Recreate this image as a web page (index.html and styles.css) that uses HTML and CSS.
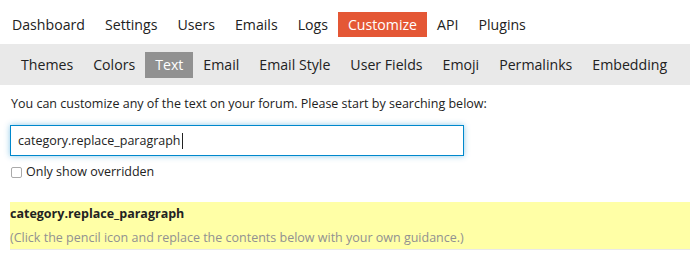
FILE: index.html
```html
<!DOCTYPE html>
<html lang="en">

<head>
    <link rel="stylesheet" href="styles.css">
    <meta charset="UTF-8">
    <meta name="viewport" content="width=device-width, initial-scale=1.0">
</head>

<body>
    <!-- admin top nav -->
    <ul class="nav-pills main-nav">
        <li><a href="#">Dashboard</a></li>
        <li><a href="#">Settings</a></li>
        <li><a href="#">Users</a></li>
        <li><a href="#">Emails</a></li>
        <li><a href="#">Logs</a></li>
        <li><a href="#" class="active">Customize</a></li>
        <li><a href="#">API</a></li>
        <li><a href="#">Plugins</a></li>
    </ul>

    <div class="sub-nav-bar">
        <ul class="nav-pills sub-nav">
            <li><a href="#">Themes</a></li>
            <li><a href="#">Colors</a></li>
            <li><a href="#" class="active">Text</a></li>
            <li><a href="#">Email</a></li>
            <li><a href="#">Email Style</a></li>
            <li><a href="#">User Fields</a></li>
            <li><a href="#">Emoji</a></li>
            <li><a href="#">Permalinks</a></li>
            <li><a href="#">Embedding</a></li>
        </ul>
    </div>

    <div class="content">
        <p class="intro">You can customize any of the text on your forum. Please start by searching below:</p>

        <div class="search-box">
            <span class="search-input">category.replace_paragraph<span class="caret"></span></span>
        </div>

        <label class="overridden">
            <span class="checkbox"></span> Only show overridden
        </label>

        <div class="site-text">
            <h3 class="site-text-id">category.replace_paragraph</h3>
            <div class="site-text-value">(Click the pencil icon and replace the contents below with your own guidance.)</div>
        </div>
    </div>
</body>

</html>
```

FILE: styles.css
```css
body {
    margin: 0;
    font-family: "Open Sans", "Liberation Sans", sans-serif;
    color: #222;
}

a {
    text-decoration: none;
    color: #222;
}

.nav-pills {
    list-style: none;
    margin: 0;
    display: flex;
}

.nav-pills a {
    display: block;
    padding: 0 10px;
    font-size: 14.15px;
}

.main-nav {
    padding: 12px 0 0 2px;
    height: 32px;
}

.main-nav a {
    line-height: 25px;
}

.main-nav a.active {
    background: #e45735;
    color: #fff;
}

.sub-nav-bar {
    background: #e9e9e9;
    height: 41px;
    box-sizing: border-box;
    padding-top: 8px;
}

.sub-nav {
    padding: 0 0 0 11px;
}

.sub-nav a {
    line-height: 26px;
}

.sub-nav a.active {
    background: #919191;
    color: #fff;
}

.content {
    padding: 0 0 0 10px;
}

.intro {
    font-size: 12.5px;
    margin: 10px 0 0 1px;
    line-height: 18px;
}

.search-box {
    margin-top: 12px;
    width: 454px;
    height: 31px;
    box-sizing: border-box;
    border: 1px solid #0088cc;
    box-shadow: 0 0 6px rgba(0, 136, 204, 0.45);
    padding: 0 7px;
    display: flex;
    align-items: center;
}

.search-input {
    font-size: 12.5px;
    display: flex;
    align-items: center;
}

.caret {
    display: inline-block;
    width: 1px;
    height: 16px;
    background: #222;
    margin-left: 1px;
}

.overridden {
    display: flex;
    align-items: center;
    margin-top: 7px;
    font-size: 12.5px;
    gap: 4px;
    line-height: 18px;
}

.checkbox {
    display: inline-block;
    width: 9px;
    height: 9px;
    border: 1px solid #aaa;
    border-radius: 2px;
    margin-left: 1px;
}

.site-text {
    margin-top: 21px;
    background: #ffffa6;
    border-bottom: 1px solid #e9e9e9;
    height: 48px;
    box-sizing: border-box;
    padding-top: 3px;
}

.site-text-id {
    font-size: 12.5px;
    font-weight: bold;
    margin: 0;
    line-height: 18px;
}

.site-text-value {
    font-size: 12.5px;
    color: #919191;
    margin-top: 6px;
    line-height: 18px;
}
```
